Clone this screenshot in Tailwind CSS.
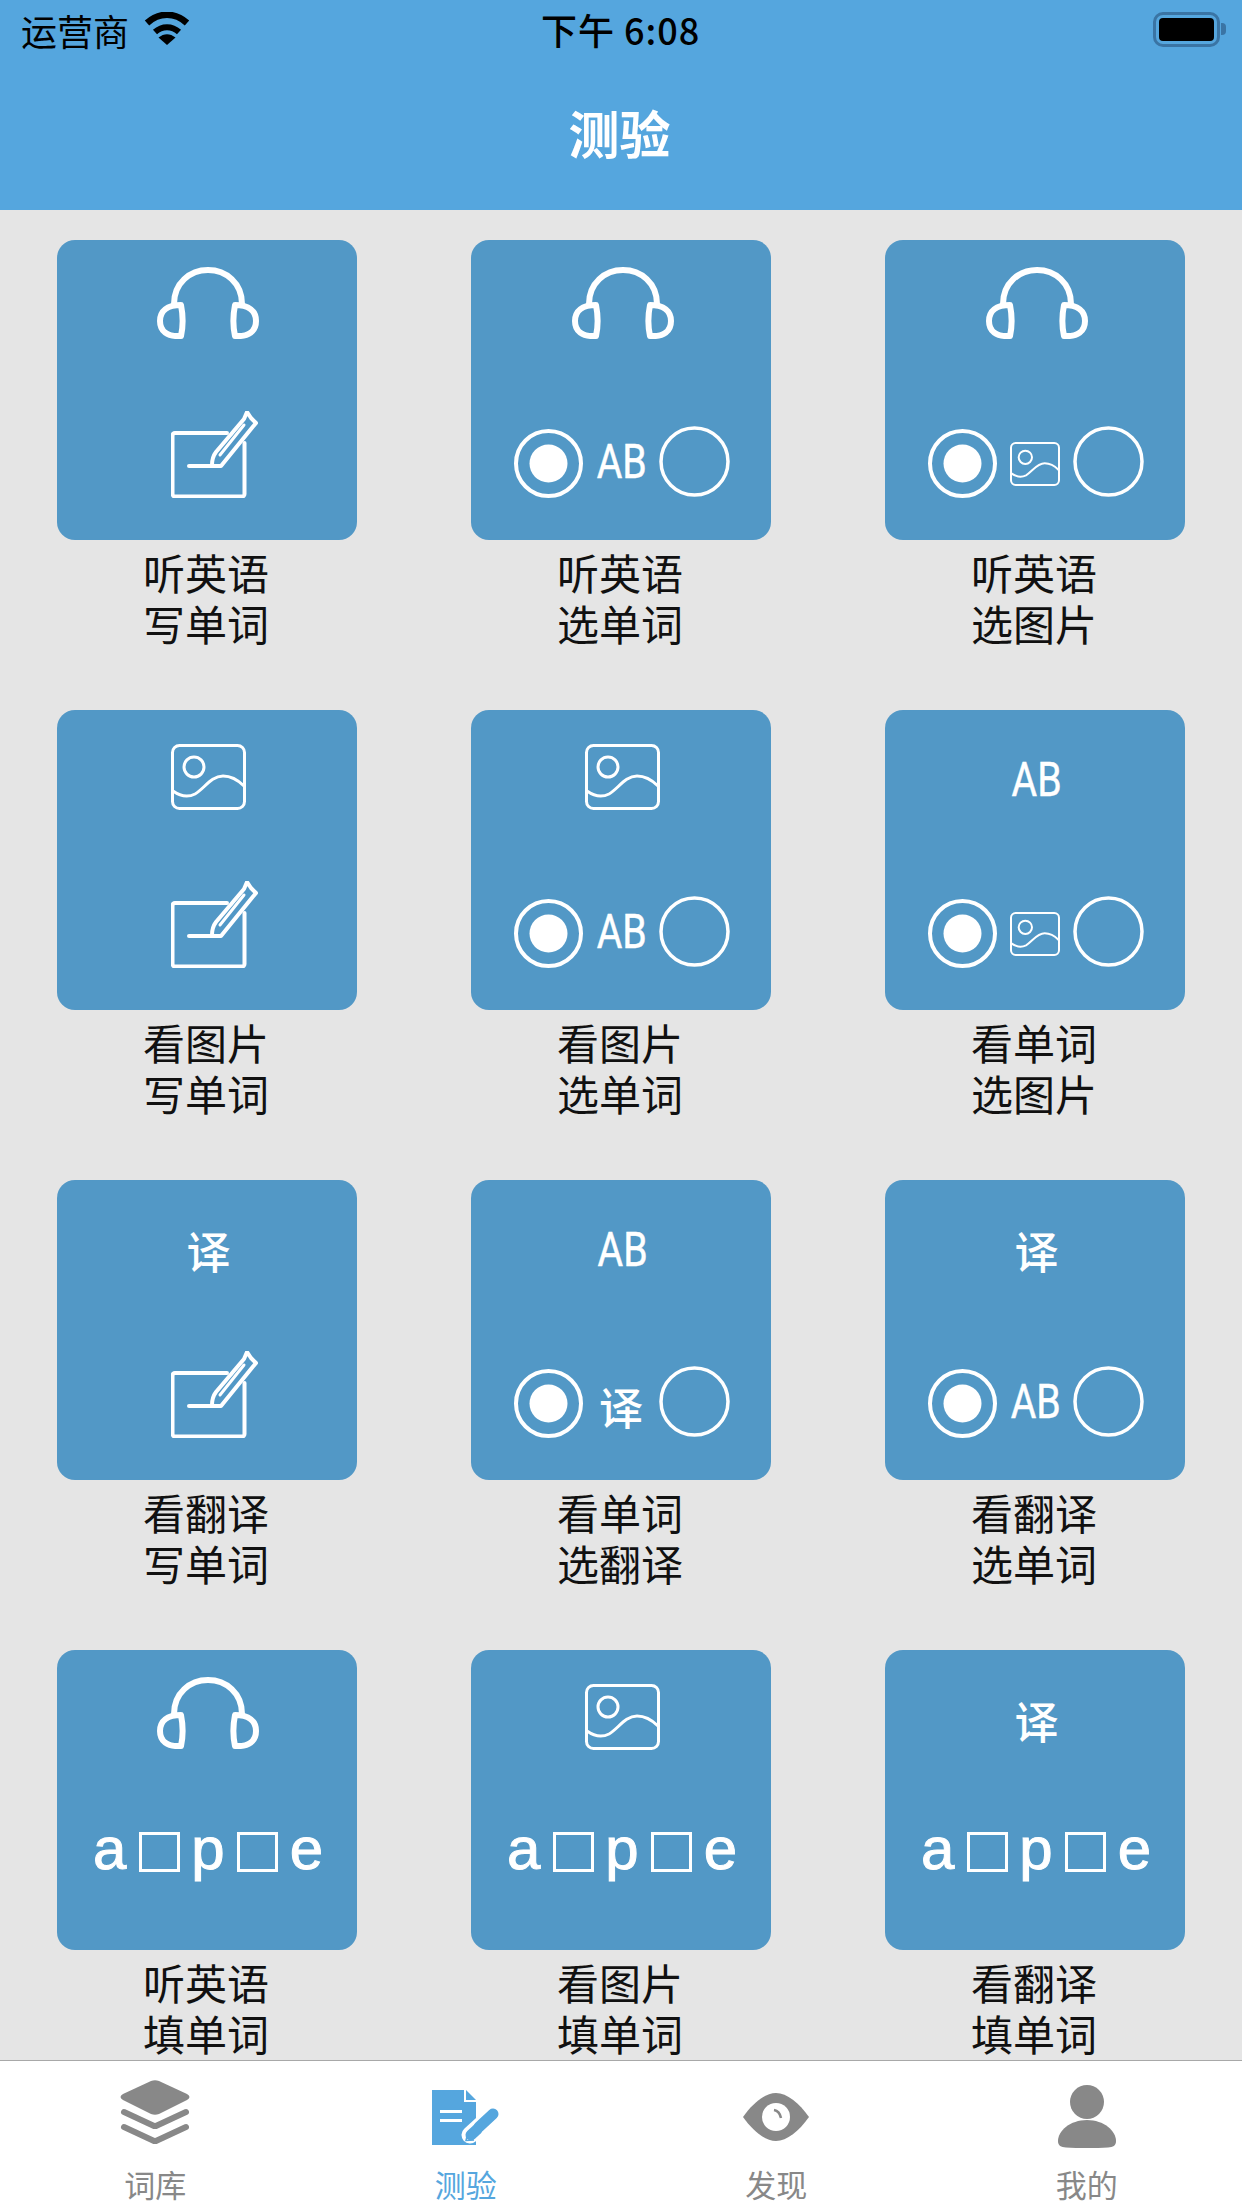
<!DOCTYPE html>
<html lang="zh-CN">
  <head>
    <meta charset="UTF-8" />
    <meta name="viewport" content="width=device-width, initial-scale=1.0" />
    <title>测验</title>
    <script src="https://cdn.jsdelivr.net/npm/@tailwindcss/browser@4"></script>
  </head>
  <body class="bg-[#e5e5e5]">
    <!-- shared icons -->
    <svg width="0" height="0" class="absolute">
      <defs>
        <symbol id="headphones" viewBox="0 0 102 72">
          <g fill="none" stroke="#fff" stroke-width="6" stroke-linejoin="round" stroke-linecap="round">
            <path d="M17 37C17 16 33 3 51 3C69 3 85 16 85 37" />
            <path d="M24 38C10 38 3 44 3 54C3 64 10 70 24 69C26 60 26 48 24 38Z" />
            <path d="M78 38C92 38 99 44 99 54C99 64 92 70 78 69C76 60 76 48 78 38Z" />
          </g>
        </symbol>
        <symbol id="write" viewBox="0 0 87 87">
          <g fill="none" stroke="#fff" stroke-width="4" stroke-linejoin="round" stroke-linecap="round">
            <path d="M56 22H4a2.500 2.500 0 0 0-2.500 2.500V83a2.500 2.500 0 0 0 2.500 2.500H71a2.500 2.500 0 0 0 2.500-2.500V32" />
            <path d="M18 55H50L80 18L85 12L80 7L76 1L73 8L45 41C42 45 41 49 41 54" />
            <path d="M49 44L73 14" stroke-width="3" />
          </g>
        </symbol>
        <symbol id="picture" viewBox="0 0 75 66">
          <g fill="none" stroke="#fff" stroke-width="3" stroke-linecap="round">
            <rect x="1.500" y="1.500" width="72" height="63" rx="7" />
            <circle cx="23" cy="23" r="10" />
            <path d="M2 47C9 52 16 54 24 50C33 45 40 32 52 32C60 32 67 36 73 42" />
          </g>
        </symbol>
        <symbol id="radio-on" viewBox="0 0 69 69">
          <circle cx="34.500" cy="34.500" r="32.500" fill="none" stroke="#fff" stroke-width="4" />
          <circle cx="34.500" cy="34.500" r="19" fill="#fff" />
        </symbol>
        <symbol id="radio-off" viewBox="0 0 71 71">
          <circle cx="35.500" cy="35.500" r="33.500" fill="none" stroke="#fff" stroke-width="3.500" />
        </symbol>
      </defs>
    </svg>

    <div class="w-[1242px] h-[2208px] flex flex-col overflow-hidden font-['Noto_Sans_CJK_SC',sans-serif]">
      <!-- Header -->
      <header class="bg-[#55a6de] h-[210px] shrink-0">
        <div class="h-[60px] relative flex items-center justify-between pl-[21px] pr-[16px] pb-[1px]">
          <div class="flex items-center gap-[15px]">
            <span class="text-[36px] leading-[46px] text-black">运营商</span>
            <svg width="46" height="33" viewBox="0 0 46 33" class="mb-[2px]">
              <path d="M3 11C15 0 31 0 43 11" fill="none" stroke="#000" stroke-width="6.500" />
              <path d="M11 20C18 13.500 28 13.500 35 20" fill="none" stroke="#000" stroke-width="6" />
              <path d="M23 33L14.500 25.500C20 21 26 21 31.500 25.500Z" fill="#000" />
            </svg>
          </div>
          <span class="absolute left-[541px] top-[6px] text-[36px] leading-[46px] font-medium text-black tracking-[1px]">下午 6:08</span>
          <div class="flex items-center mb-[1px]">
            <div class="w-[67px] h-[35px] rounded-[10px] border-[3px] border-[#3a74a4] p-[3px]">
              <div class="w-full h-full rounded-[4px] bg-black"></div>
            </div>
            <div class="w-[5px] h-[12px] ml-[1px] rounded-r-[4px] bg-[#3a74a4]"></div>
          </div>
        </div>
        <h1 class="h-[150px] flex items-center justify-center pb-[5px] pr-[3px] text-[51px] font-bold text-white">测验</h1>
      </header>

      <!-- Quiz grid -->
      <main class="flex-1 min-h-0 pt-[30px] grid grid-cols-3 auto-rows-[470px]">
        <section class="px-[57px]">
          <div class="h-[300px] rounded-[18px] bg-[#5298c6] flex flex-col">
            <svg class="w-[102px] h-[72px] mt-[27px] ml-[100px]"><use href="#headphones" /></svg>
            <svg class="w-[87px] h-[87px] mt-auto mb-[42px] ml-[114px]"><use href="#write" /></svg>
          </div>
          <p class="mt-[6px] pr-[2px] text-center text-[42px] leading-[51px] text-[#111]">听英语<br />写单词</p>
        </section>
        <section class="px-[57px]">
          <div class="h-[300px] rounded-[18px] bg-[#5298c6] flex flex-col">
            <svg class="w-[102px] h-[72px] mt-[27px] ml-[101px]"><use href="#headphones" /></svg>
            <div class="mt-auto mb-[42px] pl-[43px] flex items-start">
              <svg class="w-[69px] h-[69px] mt-[3px]"><use href="#radio-on" /></svg>
              <span class="w-[76px] h-[71px] pl-[2px] flex items-center justify-center text-[49px] text-white font-['Roboto',sans-serif] scale-x-[0.8] [-webkit-text-stroke:0.5px_white]">AB</span>
              <svg class="w-[71px] h-[71px]"><use href="#radio-off" /></svg>
            </div>
          </div>
          <p class="mt-[6px] pr-[2px] text-center text-[42px] leading-[51px] text-[#111]">听英语<br />选单词</p>
        </section>
        <section class="px-[57px]">
          <div class="h-[300px] rounded-[18px] bg-[#5298c6] flex flex-col">
            <svg class="w-[102px] h-[72px] mt-[27px] ml-[101px]"><use href="#headphones" /></svg>
            <div class="mt-auto mb-[42px] pl-[43px] flex items-start">
              <svg class="w-[69px] h-[69px] mt-[3px]"><use href="#radio-on" /></svg>
              <span class="w-[76px] h-[71px] flex items-center justify-center"><svg class="w-[50px] h-[44px] mt-[5px]"><use href="#picture" /></svg></span>
              <svg class="w-[71px] h-[71px]"><use href="#radio-off" /></svg>
            </div>
          </div>
          <p class="mt-[6px] pr-[2px] text-center text-[42px] leading-[51px] text-[#111]">听英语<br />选图片</p>
        </section>

        <section class="px-[57px]">
          <div class="h-[300px] rounded-[18px] bg-[#5298c6] flex flex-col">
            <svg class="w-[75px] h-[66px] mt-[34px] ml-[114px]"><use href="#picture" /></svg>
            <svg class="w-[87px] h-[87px] mt-auto mb-[42px] ml-[114px]"><use href="#write" /></svg>
          </div>
          <p class="mt-[6px] pr-[2px] text-center text-[42px] leading-[51px] text-[#111]">看图片<br />写单词</p>
        </section>
        <section class="px-[57px]">
          <div class="h-[300px] rounded-[18px] bg-[#5298c6] flex flex-col">
            <svg class="w-[75px] h-[66px] mt-[34px] ml-[114px]"><use href="#picture" /></svg>
            <div class="mt-auto mb-[42px] pl-[43px] flex items-start">
              <svg class="w-[69px] h-[69px] mt-[3px]"><use href="#radio-on" /></svg>
              <span class="w-[76px] h-[71px] pl-[2px] flex items-center justify-center text-[49px] text-white font-['Roboto',sans-serif] scale-x-[0.8] [-webkit-text-stroke:0.5px_white]">AB</span>
              <svg class="w-[71px] h-[71px]"><use href="#radio-off" /></svg>
            </div>
          </div>
          <p class="mt-[6px] pr-[2px] text-center text-[42px] leading-[51px] text-[#111]">看图片<br />选单词</p>
        </section>
        <section class="px-[57px]">
          <div class="h-[300px] rounded-[18px] bg-[#5298c6] flex flex-col">
            <span class="h-[60px] mt-[40px] flex items-center justify-center pl-[4px] text-[49px] text-white font-['Roboto',sans-serif] scale-x-[0.8] [-webkit-text-stroke:0.5px_white]">AB</span>
            <div class="mt-auto mb-[42px] pl-[43px] flex items-start">
              <svg class="w-[69px] h-[69px] mt-[3px]"><use href="#radio-on" /></svg>
              <span class="w-[76px] h-[71px] flex items-center justify-center"><svg class="w-[50px] h-[44px] mt-[5px]"><use href="#picture" /></svg></span>
              <svg class="w-[71px] h-[71px]"><use href="#radio-off" /></svg>
            </div>
          </div>
          <p class="mt-[6px] pr-[2px] text-center text-[42px] leading-[51px] text-[#111]">看单词<br />选图片</p>
        </section>

        <section class="px-[57px]">
          <div class="h-[300px] rounded-[18px] bg-[#5298c6] flex flex-col">
            <span class="h-[60px] mt-[40px] flex items-center justify-center pl-[3px] text-[44px] font-medium text-white">译</span>
            <svg class="w-[87px] h-[87px] mt-auto mb-[42px] ml-[114px]"><use href="#write" /></svg>
          </div>
          <p class="mt-[6px] pr-[2px] text-center text-[42px] leading-[51px] text-[#111]">看翻译<br />写单词</p>
        </section>
        <section class="px-[57px]">
          <div class="h-[300px] rounded-[18px] bg-[#5298c6] flex flex-col">
            <span class="h-[60px] mt-[40px] flex items-center justify-center pl-[4px] text-[49px] text-white font-['Roboto',sans-serif] scale-x-[0.8] [-webkit-text-stroke:0.5px_white]">AB</span>
            <div class="mt-auto mb-[42px] pl-[43px] flex items-start">
              <svg class="w-[69px] h-[69px] mt-[3px]"><use href="#radio-on" /></svg>
              <span class="w-[76px] h-[71px] flex items-center justify-center pt-[8px] text-[44px] font-medium text-white">译</span>
              <svg class="w-[71px] h-[71px]"><use href="#radio-off" /></svg>
            </div>
          </div>
          <p class="mt-[6px] pr-[2px] text-center text-[42px] leading-[51px] text-[#111]">看单词<br />选翻译</p>
        </section>
        <section class="px-[57px]">
          <div class="h-[300px] rounded-[18px] bg-[#5298c6] flex flex-col">
            <span class="h-[60px] mt-[40px] flex items-center justify-center pl-[3px] text-[44px] font-medium text-white">译</span>
            <div class="mt-auto mb-[42px] pl-[43px] flex items-start">
              <svg class="w-[69px] h-[69px] mt-[3px]"><use href="#radio-on" /></svg>
              <span class="w-[76px] h-[71px] pl-[2px] flex items-center justify-center text-[49px] text-white font-['Roboto',sans-serif] scale-x-[0.8] [-webkit-text-stroke:0.5px_white]">AB</span>
              <svg class="w-[71px] h-[71px]"><use href="#radio-off" /></svg>
            </div>
          </div>
          <p class="mt-[6px] pr-[2px] text-center text-[42px] leading-[51px] text-[#111]">看翻译<br />选单词</p>
        </section>

        <section class="px-[57px]">
          <div class="h-[300px] rounded-[18px] bg-[#5298c6] flex flex-col">
            <svg class="w-[102px] h-[72px] mt-[27px] ml-[100px]"><use href="#headphones" /></svg>
            <div class="mt-auto mb-[78px] h-[40px] pl-[2px] flex items-center justify-center gap-[12px] text-[60px] leading-[40px] text-white font-['Liberation_Sans',sans-serif] [-webkit-text-stroke:1px_white]">
              <span class="-mt-[7px]">a</span><span class="w-[41px] h-[40px] ml-[1px] -mr-[1px] border-[3px] border-white"></span><span class="-mt-[7px]">p</span><span class="w-[41px] h-[40px] border-[3px] border-white"></span><span class="-mt-[7px]">e</span>
            </div>
          </div>
          <p class="mt-[6px] pr-[2px] text-center text-[42px] leading-[51px] text-[#111]">听英语<br />填单词</p>
        </section>
        <section class="px-[57px]">
          <div class="h-[300px] rounded-[18px] bg-[#5298c6] flex flex-col">
            <svg class="w-[75px] h-[66px] mt-[34px] ml-[114px]"><use href="#picture" /></svg>
            <div class="mt-auto mb-[78px] h-[40px] pl-[2px] flex items-center justify-center gap-[12px] text-[60px] leading-[40px] text-white font-['Liberation_Sans',sans-serif] [-webkit-text-stroke:1px_white]">
              <span class="-mt-[7px]">a</span><span class="w-[41px] h-[40px] ml-[1px] -mr-[1px] border-[3px] border-white"></span><span class="-mt-[7px]">p</span><span class="w-[41px] h-[40px] border-[3px] border-white"></span><span class="-mt-[7px]">e</span>
            </div>
          </div>
          <p class="mt-[6px] pr-[2px] text-center text-[42px] leading-[51px] text-[#111]">看图片<br />填单词</p>
        </section>
        <section class="px-[57px]">
          <div class="h-[300px] rounded-[18px] bg-[#5298c6] flex flex-col">
            <span class="h-[60px] mt-[40px] flex items-center justify-center pl-[3px] text-[44px] font-medium text-white">译</span>
            <div class="mt-auto mb-[78px] h-[40px] pl-[2px] flex items-center justify-center gap-[12px] text-[60px] leading-[40px] text-white font-['Liberation_Sans',sans-serif] [-webkit-text-stroke:1px_white]">
              <span class="-mt-[7px]">a</span><span class="w-[41px] h-[40px] ml-[1px] -mr-[1px] border-[3px] border-white"></span><span class="-mt-[7px]">p</span><span class="w-[41px] h-[40px] border-[3px] border-white"></span><span class="-mt-[7px]">e</span>
            </div>
          </div>
          <p class="mt-[6px] pr-[2px] text-center text-[42px] leading-[51px] text-[#111]">看翻译<br />填单词</p>
        </section>
      </main>

      <!-- Tab bar -->
      <nav class="relative h-[148px] shrink-0 bg-white border-t border-[#a8a8a8] grid grid-cols-4">
        <a class="flex flex-col items-center text-[#888]">
          <svg width="71" height="66" viewBox="0 0 71 66" class="mt-[19px]">
            <path d="M31 1Q35 -0.500 39 1L67 14Q72 17 67 20L39 34Q35 35.500 31 34L3 20Q-2 17 3 14Z" fill="#888" />
            <path d="M4 32L33 45.500Q35 46.500 37 45.500L66 32" fill="none" stroke="#888" stroke-width="6" stroke-linecap="round" />
            <path d="M4 47L33 60.500Q35 61.500 37 60.500L66 47" fill="none" stroke="#888" stroke-width="6" stroke-linecap="round" />
          </svg>
          <span class="mt-auto mb-[6px] text-[31px] leading-[36px]">词库</span>
        </a>
        <a class="flex flex-col items-center text-[#55a6de]">
          <svg width="67" height="55" viewBox="0 0 67 55" class="mt-[29px]">
            <path d="M0 0H32V12H44V55H0Z" fill="#55a6de" />
            <path d="M34 0L44 10H34Z" fill="#55a6de" />
            <path d="M8 21.500H30M8 30.500H30" stroke="#fff" stroke-width="3" />
            <path d="M61 24L38 45" stroke="#fff" stroke-width="17" stroke-linecap="round" />
            <path d="M61 24L47 37" stroke="#55a6de" stroke-width="11" stroke-linecap="round" />
            <path d="M45 39.500L39 45" stroke="#55a6de" stroke-width="11" stroke-linecap="round" />
            <path d="M36 42L34 50.500L42 50" fill="none" stroke="#55a6de" stroke-width="1.500" />
          </svg>
          <span class="mt-auto mb-[6px] text-[31px] leading-[36px]">测验</span>
        </a>
        <a class="flex flex-col items-center text-[#888]">
          <svg width="66" height="48" viewBox="0 0 66 48" class="mt-[32px]">
            <path d="M0 24C10 10 22 0 33 0C44 0 56 10 66 24C56 38 44 48 33 48C22 48 10 38 0 24Z" fill="#888" />
            <circle cx="33" cy="24" r="14" fill="#fff" />
            <path d="M31 17C34 17.500 37 20 38 25" fill="none" stroke="#888" stroke-width="2.500" />
          </svg>
          <span class="mt-auto mb-[6px] text-[31px] leading-[36px]">发现</span>
        </a>
        <a class="flex flex-col items-center text-[#888]">
          <svg width="58" height="64" viewBox="0 0 58 64" class="mt-[24px]">
            <circle cx="29" cy="17" r="17" fill="#888" />
            <path d="M29 35C12 35 0 46 0 56C0 61 3 62 8 62.500C20 63.300 38 63.300 50 62.500C55 62 58 61 58 56C58 46 46 35 29 35Z" fill="#888" />
          </svg>
          <span class="mt-auto mb-[6px] text-[31px] leading-[36px]">我的</span>
        </a>
      </nav>
    </div>
  </body>
</html>
